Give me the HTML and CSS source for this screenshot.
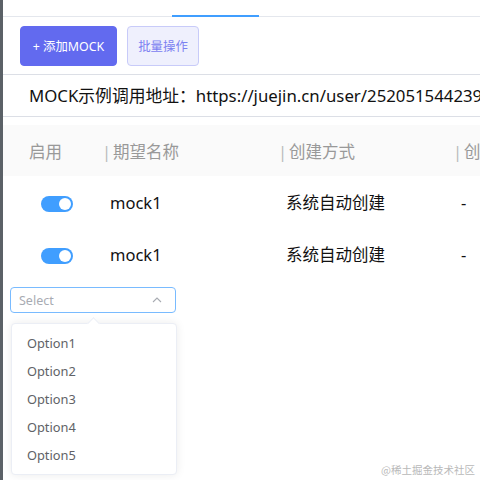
FILE: index.html
```html
<!DOCTYPE html>
<html lang="zh-CN">
<head>
<meta charset="UTF-8" />
<meta name="viewport" content="width=device-width, initial-scale=1.0"/>
<title>Mock 管理</title>
<link rel="stylesheet" href="styles.css">
</head>
<body>
<div class="page">
    <div class="tabs">
        <div class="tab"></div>
        <div class="tab active"></div>
    </div>
    <div class="toolbar">
        <button class="btn btn-primary">+ 添加MOCK</button>
        <button class="btn btn-plain">批量操作</button>
    </div>
    <div class="url">MOCK示例调用地址：https://juejin.cn/user/2520515442391234</div>
    <table class="mock-table">
        <colgroup>
            <col class="col-switch">
            <col class="col-name">
            <col class="col-type">
            <col class="col-time">
        </colgroup>
        <thead>
            <tr>
                <th class="cell-switch">启用</th>
                <th><span class="sep">|</span>期望名称</th>
                <th><span class="sep">|</span>创建方式</th>
                <th><span class="sep">|</span>创建时间</th>
            </tr>
        </thead>
        <tbody>
            <tr>
                <td class="cell-switch"><span class="switch on"></span></td>
                <td>mock1</td>
                <td>系统自动创建</td>
                <td>-</td>
            </tr>
            <tr>
                <td class="cell-switch"><span class="switch on"></span></td>
                <td>mock1</td>
                <td>系统自动创建</td>
                <td>-</td>
            </tr>
        </tbody>
    </table>
    <div class="select-wrap">
        <div class="select">
            <span class="placeholder">Select</span>
            <svg class="arrow" width="12" height="12" viewBox="0 0 12 12"><path d="M2 8 L6 4 L10 8" fill="none" stroke="#a8abb2" stroke-width="1.1"/></svg>
        </div>
        <div class="dropdown">
            <ul class="options">
                <li>Option1</li>
                <li>Option2</li>
                <li>Option3</li>
                <li>Option4</li>
                <li>Option5</li>
            </ul>
        </div>
    </div>
    <div class="watermark">@稀土掘金技术社区</div>
</div>
</body>
</html>
```

FILE: styles.css
```css
body {
    margin: 0;
    background-color: #fff;
    font-family: "Noto Sans", "Noto Sans CJK SC", sans-serif;
}
.page {
    position: relative;
    width: 477px;
    height: 480px;
    border-left: 3px solid #5b6167;
    overflow: hidden;
    background-color: #fff;
}
.tabs {
    display: flex;
    align-items: flex-end;
    height: 16px;
    border-bottom: 1px solid #e4e7ed;
}
.tab { width: 169px; }
.tab.active {
    width: 87px;
    height: 2px;
    margin-bottom: -1px;
    background-color: #409eff;
}
.toolbar {
    display: flex;
    gap: 10px;
    padding: 9px 17px 8px;
    border-bottom: 1px solid #dcdfe6;
}
.btn {
    height: 40px;
    border-radius: 4px;
    font-family: inherit;
    font-size: 12.4px;
    cursor: pointer;
}
.btn-primary {
    width: 97px;
    background-color: #626aef;
    border: 1px solid #626aef;
    color: #fff;
}
.btn-plain {
    width: 72px;
    background-color: #eff0fd;
    border: 1px solid #c8cbf9;
    color: #7b80f1;
}
.url {
    height: 41px;
    line-height: 41px;
    padding-left: 26px;
    font-size: 16.8px;
    color: #111;
    white-space: nowrap;
    border-bottom: 1px solid #dcdfe6;
}
.mock-table {
    margin-top: 8px;
    width: 600px;
    border-collapse: collapse;
    table-layout: fixed;
    font-size: 16.5px;
}
.col-switch { width: 99px; }
.col-name { width: 176px; }
.col-type { width: 175px; }
.col-time { width: 150px; }
.mock-table th {
    height: 51px;
    padding: 0;
    background-color: #fafafa;
    color: #999;
    font-weight: normal;
    text-align: left;
    white-space: nowrap;
}
.mock-table th .sep {
    color: #bbb;
    margin-right: 2px;
}
.mock-table td {
    height: 52px;
    padding: 0 0 0 8px;
    color: #111;
    white-space: nowrap;
}
.mock-table th.cell-switch { padding-left: 26px; }
.mock-table td.cell-switch { padding-left: 38px; }
.switch {
    display: inline-block;
    position: relative;
    width: 32px;
    height: 16px;
    border-radius: 8px;
    background-color: #409eff;
    vertical-align: middle;
}
.switch::after {
    content: "";
    position: absolute;
    top: 2px;
    right: 2px;
    width: 12px;
    height: 12px;
    border-radius: 50%;
    background-color: #fff;
}
.select-wrap {
    position: relative;
    margin: 7px 0 0 7px;
    width: 166px;
}
.select {
    display: flex;
    align-items: center;
    justify-content: space-between;
    height: 24px;
    padding: 0 12px 0 8px;
    border: 1px solid #79bbff;
    border-radius: 4px;
    width: 144px;
}
.placeholder {
    font-size: 12.5px;
    color: #a8abb2;
}
.dropdown {
    position: absolute;
    top: 36px;
    left: 1px;
    width: 164px;
    background-color: #fff;
    border: 1px solid #ebeef5;
    border-radius: 4px;
    box-shadow: 0 0 10px rgba(0, 0, 0, 0.08);
}
.dropdown::before {
    content: "";
    position: absolute;
    top: -5px;
    left: 77px;
    width: 8px;
    height: 8px;
    background-color: #fff;
    border-top: 1px solid #ebeef5;
    border-left: 1px solid #ebeef5;
    transform: rotate(45deg);
}
.options {
    list-style: none;
    margin: 0;
    padding: 5px 0;
}
.options li {
    height: 28px;
    line-height: 28px;
    padding-left: 15px;
    font-size: 12.8px;
    color: #606266;
}
.watermark {
    position: absolute;
    right: 5px;
    bottom: 3px;
    font-size: 10.5px;
    color: #b9b9b9;
    font-family: "Noto Sans CJK SC", sans-serif;
}
```
